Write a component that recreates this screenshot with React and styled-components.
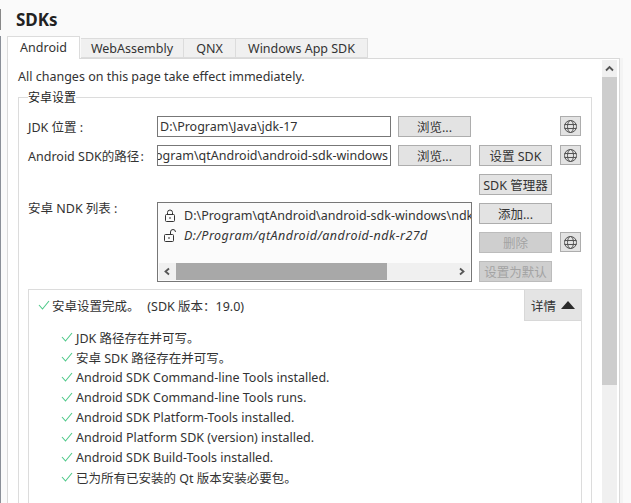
import React from "react";
import styled, { createGlobalStyle } from "styled-components";

const Global = createGlobalStyle`
  html, body { margin: 0; padding: 0; height: 503px; overflow: hidden; background: #fafafa; }
  body { font-family: "Noto Sans", "Noto Sans CJK SC", sans-serif; font-size: 12.5px; color: #2b2b2b; }
`;

const Page = styled.div`
  width: 631px; height: 503px; overflow: hidden; display: flex; flex-direction: column; background: #fafafa;
`;
const Header = styled.header`
  position: relative; height: 36px; flex: none; display: flex; align-items: center; padding: 3px 0 0 16px; box-sizing: border-box;
  &::before { content: ""; position: absolute; left: 0; top: 9px; width: 1px; height: 21px; background: #888; }
`;
const Title = styled.h1`
  margin: 0; font-size: 17px; font-weight: 700; color: #222;
`;
const Workspace = styled.div`
  flex: 1; min-height: 0; display: flex; flex-direction: column; padding: 0 11px 0 6px; border-left: 1px solid #8a8f98; box-sizing: border-box;
`;
const TabBar = styled.div`
  display: flex; align-items: flex-end; height: 22px; flex: none; position: relative; z-index: 1;
`;
const Tab = styled.div`
  box-sizing: border-box; width: ${p => p.$w}px; height: ${p => (p.$active ? 23 : 20)}px;
  margin-bottom: ${p => (p.$active ? -1 : 0)}px; margin-right: ${p => (p.$active ? 1 : 0)}px;
  display: flex; align-items: center; justify-content: center;
  background: ${p => (p.$active ? "#fff" : "#f0f0f0")};
  border: 1px solid #dcdcdc; border-bottom: ${p => (p.$active ? "none" : "1px solid #dcdcdc")};
  border-left: ${p => (p.$first || p.$active ? "1px solid #dcdcdc" : "none")};
  padding-bottom: ${p => (p.$active ? 2 : 0)}px;
  color: #333;
`;
const Pane = styled.div`
  flex: 1; min-height: 0; display: flex; background: #fff; border: 1px solid #d9d9d9; border-bottom: none; box-shadow: 3px 0 0 #f4f4f4;
`;
const Content = styled.div`
  flex: 1; min-width: 0; padding: 9px 10px 0 10px; display: flex; flex-direction: column; overflow: hidden;
`;
const Note = styled.div`
  height: 18px; line-height: 18px; color: #333;
`;
const Scrollbar = styled.div`
  width: 15px; flex: none; margin: 1px 2px 0 0; background: #f0f0f0; display: flex; flex-direction: column;
`;
const ScrollArrow = styled.div`
  height: 17px; display: flex; align-items: center; justify-content: center; background: #f0f0f0;
`;
const ScrollThumb = styled.div`
  height: 308px; background: #cdcdcd;
`;
const Group = styled.section`
  margin: 11px 0 0 0; padding: 18px 9px 0 9px; border: 1px solid #dcdcdc; border-bottom: none; min-width: 0; flex: 1; box-sizing: border-box;
  position: relative;
`;
const GroupTitle = styled.span`
  padding: 0; line-height: 14px; color: #222; font-size: 12px; background: #fff; position: absolute; top: -7px; left: 9px;
`;
const FormGrid = styled.div`
  display: grid; grid-template-columns: 121px 233px 73px 73px 21px; grid-auto-rows: 21px; column-gap: 8px; row-gap: 8px;
`;
const Label = styled.label`
  display: flex; align-items: ${p => (p.$top ? "flex-start" : "center")}; color: #333; white-space: pre;
  ${p => p.$top && "line-height: 14px; margin-top: -1px;"}
  grid-row: ${p => p.$row}; grid-column: 1;
`;
const PathInput = styled.div`
  grid-row: ${p => p.$row}; grid-column: 2; margin-right: -1px; box-sizing: border-box; border: 1px solid #777; background: #fff;
  display: flex; align-items: center; overflow: hidden; white-space: nowrap; padding: 0 2px; color: #333;
  justify-content: ${p => (p.$end ? "flex-end" : "flex-start")};
`;
const Btn = styled.div`
  grid-row: ${p => p.$row}; grid-column: ${p => p.$col}; box-sizing: border-box; border: 1px solid #adadad; background: #e3e3e3;
  display: flex; align-items: center; justify-content: center; color: ${p => (p.$off ? "#a3a3a3" : "#333")}; white-space: nowrap;
  ${p => p.$off && "background: #cfcfcf; border-color: #bcbcbc;"}
`;
const GlobeBtn = styled.div`
  grid-row: ${p => p.$row}; grid-column: 5; height: 20px; box-sizing: border-box; border: 1px solid #adadad; background: #e3e3e3;
  display: flex; align-items: center; justify-content: center;
`;
const ListBox = styled.div`
  grid-row: 4 / span 3; grid-column: 2 / span 2; margin: -1px -1px 0 0; box-sizing: border-box; border: 1px solid #777; background: #fbfbfb;
  display: flex; flex-direction: column; overflow: hidden;
`;
const ListBody = styled.div`
  flex: 1; min-height: 0; padding: 2px 0 0 6px; overflow: hidden;
`;
const ListItem = styled.div`
  display: flex; align-items: center; gap: 8px; height: 20px; white-space: nowrap; color: #333; width: 400px;
  ${p => p.$italic && "font-style: italic; letter-spacing: 0.45px;"}
`;
const HScroll = styled.div`
  height: 17px; flex: none; margin: 0 1px 1px 1px; background: #f0f0f0; display: flex; align-items: stretch;
`;
const HArrow = styled.div`
  width: 17px; flex: none; display: flex; align-items: center; justify-content: center;
`;
const HThumb = styled.div`
  width: 211px; background: #a8a8a8;
`;
const HTrack = styled.div`flex: 1;`;
const Details = styled.div`
  margin-top: 7px; border: 1px solid #dcdcdc; border-bottom: none; background: #fff; height: 240px; box-sizing: border-box;
`;
const DetailHead = styled.div`
  display: flex; justify-content: space-between; align-items: flex-start; height: 32px;
`;
const Summary = styled.div`
  display: flex; align-items: center; height: 30px; padding-left: 9px; gap: 2px; white-space: pre; color: #333;
`;
const DetailBtn = styled.div`
  width: 57px; height: 31px; background: #e4e4e4; border-bottom: 1px solid #d8d8d8; border-left: 1px solid #d8d8d8; box-sizing: border-box; display: flex; align-items: center; justify-content: center; gap: 5px; color: #333;
`;
const Checks = styled.ul`
  list-style: none; margin: 5px 0 0 0; padding: 0 0 0 32px;
`;
const CheckRow = styled.li`
  display: flex; align-items: center; gap: 3px; height: 20px; white-space: nowrap; color: #333;
`;

const Check = () => (
  <svg width="12" height="10" viewBox="0 0 12 10" fill="none"><path d="M1 5l3.5 4L11 1" stroke="#4fc98a" strokeWidth="1.1" /></svg>
);
const Globe = () => (
  <svg width="15" height="15" viewBox="0 0 15 15" fill="none" stroke="#555" strokeWidth="1">
    <circle cx="7.5" cy="7.5" r="6" />
    <ellipse cx="7.5" cy="7.5" rx="3" ry="6" />
    <path d="M1.5 5.5h12M1.5 9.5h12" />
  </svg>
);
const LockClosed = () => (
  <svg width="12" height="13" viewBox="0 0 12 13" fill="none" stroke="#333" strokeWidth="1">
    <rect x="1.5" y="5.5" width="9" height="7" rx="1" />
    <path d="M3.5 5.5V3.5a2.5 2.5 0 0 1 5 0v2" />
    <path d="M5 9h2" />
  </svg>
);
const LockOpen = () => (
  <svg width="12" height="13" viewBox="0 0 12 13" fill="none" stroke="#333" strokeWidth="1">
    <rect x="0.5" y="5.5" width="9" height="7" rx="1" />
    <path d="M6.5 5.5V3a2.5 2.5 0 0 1 5 0" />
    <path d="M4 9h2" />
  </svg>
);
const Chevron = ({ d }) => (
  <svg width="9" height="9" viewBox="0 0 9 9" fill="none" stroke="#555" strokeWidth="1.8"><path d={d} /></svg>
);

const checks = [
  "JDK 路径存在并可写。",
  "安卓 SDK 路径存在并可写。",
  "Android SDK Command-line Tools installed.",
  "Android SDK Command-line Tools runs.",
  "Android SDK Platform-Tools installed.",
  "Android Platform SDK (version) installed.",
  "Android SDK Build-Tools installed.",
  "已为所有已安装的 Qt 版本安装必要包。",
];

export default function App() {
  return (
    <Page>
      <Global />
      <Header><Title>SDKs</Title></Header>
      <Workspace>
        <TabBar>
          <Tab $w={73} $active $first>Android</Tab>
          <Tab $w={103}>WebAssembly</Tab>
          <Tab $w={52}>QNX</Tab>
          <Tab $w={132}>Windows App SDK</Tab>
        </TabBar>
        <Pane>
          <Content>
            <Note>All changes on this page take effect immediately.</Note>
            <Group>
              <GroupTitle>安卓设置</GroupTitle>
              <FormGrid>
                <Label $row={1}>JDK 位置 :</Label>
                <PathInput $row={1}>D:\Program\Java\jdk-17</PathInput>
                <Btn $row={1} $col={3}>浏览...</Btn>
                <GlobeBtn $row={1}><Globe /></GlobeBtn>

                <Label $row={2}>Android SDK的路径{"\u200a"}:</Label>
                <PathInput $row={2} $end>D:\Program\qtAndroid\android-sdk-windows</PathInput>
                <Btn $row={2} $col={3}>浏览...</Btn>
                <Btn $row={2} $col={4}>设置 SDK</Btn>
                <GlobeBtn $row={2}><Globe /></GlobeBtn>

                <Btn $row={3} $col={4}>SDK 管理器</Btn>

                <Label $row={4} $top>安卓 NDK 列表 :</Label>
                <ListBox>
                  <ListBody>
                    <ListItem><LockClosed />D:\Program\qtAndroid\android-sdk-windows\ndk\27.0</ListItem>
                    <ListItem $italic><LockOpen />D:/Program/qtAndroid/android-ndk-r27d</ListItem>
                  </ListBody>
                  <HScroll>
                    <HArrow><Chevron d="M6 1.5L2.5 4.5 6 7.5" /></HArrow>
                    <HThumb />
                    <HTrack />
                    <HArrow><Chevron d="M3 1.5L6.5 4.5 3 7.5" /></HArrow>
                  </HScroll>
                </ListBox>
                <Btn $row={4} $col={4}>添加...</Btn>
                <Btn $row={5} $col={4} $off>删除</Btn>
                <GlobeBtn $row={5}><Globe /></GlobeBtn>
                <Btn $row={6} $col={4} $off>设置为默认</Btn>
              </FormGrid>
              <Details>
                <DetailHead>
                  <Summary><Check />安卓设置完成。{"  \u200a"}(SDK 版本{"\uFF1A"}19.0)</Summary>
                  <DetailBtn>详情
                    <svg width="14" height="8" viewBox="0 0 14 8"><path d="M7 0l7 8H0z" fill="#2b2b2b" /></svg>
                  </DetailBtn>
                </DetailHead>
                <Checks>
                  {checks.map(c => <CheckRow key={c}><Check />{c}</CheckRow>)}
                </Checks>
              </Details>
            </Group>
          </Content>
          <Scrollbar>
            <ScrollArrow><Chevron d="M1 6.5L4.5 3 8 6.5" /></ScrollArrow>
            <ScrollThumb />
          </Scrollbar>
        </Pane>
      </Workspace>
    </Page>
  );
}
